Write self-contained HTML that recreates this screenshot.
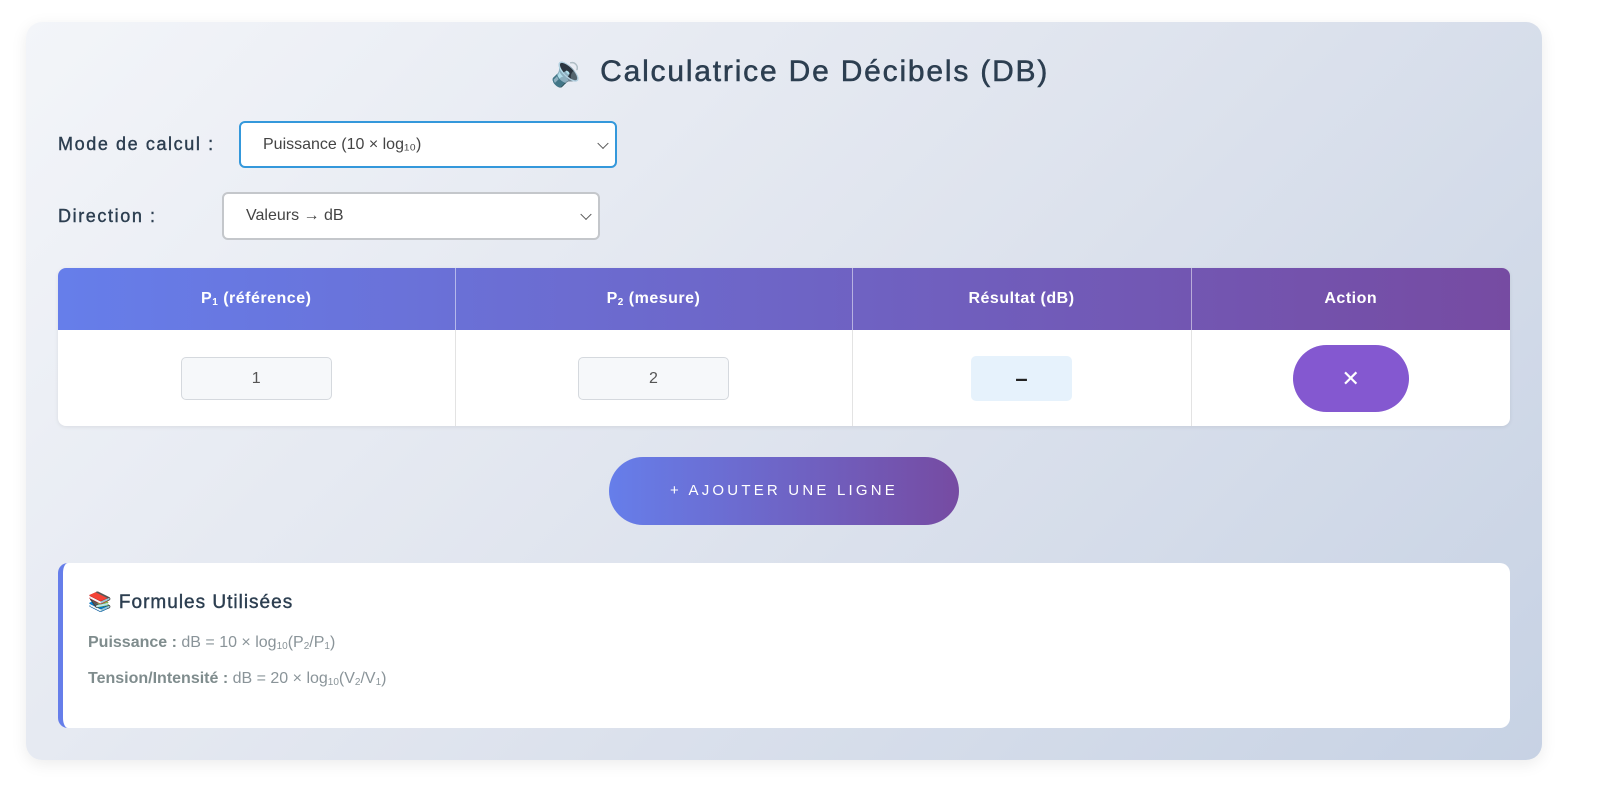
<!DOCTYPE html>
<html><head><meta charset="utf-8"><style>
*{box-sizing:border-box;margin:0;padding:0}
body{width:1600px;height:799px;background:#fff;font-family:"Liberation Sans",sans-serif;position:relative;overflow:hidden}
.card{position:absolute;left:26px;top:22px;width:1516px;height:738px;border-radius:16px;background:linear-gradient(135deg,#f3f5f9 0%,#dfe4ee 50%,#c7d2e4 100%);box-shadow:0 4px 16px rgba(0,0,0,.08)}
h1{position:absolute;left:0;right:0;top:54px;text-align:center;font-size:30px;font-weight:normal;color:#2c3e50;letter-spacing:1.8px;-webkit-text-stroke:.5px #2c3e50}
.lbl{position:absolute;left:58px;font-size:18px;letter-spacing:1.6px;color:#2c3e50;-webkit-text-stroke:.4px #2c3e50}
.sel{position:absolute;background:#fff;border-radius:6px;font-size:16px;color:#444;padding-left:22px;display:flex;align-items:center}
.sel:after{content:"";position:absolute;right:8px;top:50%;width:7px;height:7px;border-right:1.3px solid #555;border-bottom:1.3px solid #555;transform:translateY(-70%) rotate(45deg)}
table{position:absolute;left:58px;top:268px;width:1452px;border-collapse:collapse;border-radius:8px;overflow:hidden;background:#fff;box-shadow:0 1px 4px rgba(0,0,0,.08)}
th{height:62px;color:#fff;font-size:16px;font-weight:bold;letter-spacing:.5px;border-right:1px solid rgba(255,255,255,.5)}
thead tr{background:linear-gradient(90deg,#667eea,#764ba2)}
td{height:96px;border-right:1px solid #e3e3e3;text-align:center}
th:last-child,td:last-child{border-right:none}
.inp{display:inline-block;width:151px;height:43px;border:1px solid #d5d9de;border-radius:5px;background:#f6f8fa;line-height:41px;color:#555;font-size:16px}
.res{display:inline-block;width:101px;height:45px;background:#e6f2fc;border-radius:5px;line-height:45px;font-weight:bold;font-size:22px;color:#222}
.del{display:inline-block;width:116px;height:67px;border-radius:34px;background:#8458d0;color:#fff;line-height:67px;font-size:22px}
.add{position:absolute;left:609px;top:457px;width:350px;height:68px;border-radius:34px;background:linear-gradient(90deg,#667eea,#764ba2);color:#fff;text-align:center;line-height:68px;font-size:15px;letter-spacing:3.2px}
.form{position:absolute;left:58px;top:563px;width:1452px;height:165px;background:#fff;border-radius:10px;border-left:5px solid #667eea;padding:27px 0 0 25px}
.form h3{font-size:19px;font-weight:normal;letter-spacing:1px;color:#2c3e50;-webkit-text-stroke:.4px #2c3e50}
.form p{font-size:16px;color:#8a9499;margin-top:20px}
.form p+p{margin-top:18px}
.form p b{color:#7f8c8d}
sub{font-size:10px;vertical-align:-2px}
</style></head><body>
<div class="card"></div>
<h1>🔉 Calculatrice De Décibels (DB)</h1>
<div class="lbl" style="top:134px">Mode de calcul :</div>
<div class="sel" style="left:239px;top:121px;width:378px;height:47px;border:2px solid #3498db">Puissance (10 × log₁₀)</div>
<div class="lbl" style="top:206px">Direction :</div>
<div class="sel" style="left:222px;top:192px;width:378px;height:48px;border:2px solid #c4c7cb">Valeurs → dB</div>
<table><thead><tr><th style="width:397px">P<sub>1</sub> (référence)</th><th style="width:397px">P<sub>2</sub> (mesure)</th><th style="width:339px">Résultat (dB)</th><th>Action</th></tr></thead>
<tbody><tr><td><span class="inp">1</span></td><td><span class="inp">2</span></td><td><span class="res">–</span></td><td><span class="del">✕</span></td></tr></tbody></table>
<div class="add">+ AJOUTER UNE LIGNE</div>
<div class="form"><h3>📚 Formules Utilisées</h3>
<p><b>Puissance :</b> dB = 10 × log<sub>10</sub>(P<sub>2</sub>/P<sub>1</sub>)</p>
<p><b>Tension/Intensité :</b> dB = 20 × log<sub>10</sub>(V<sub>2</sub>/V<sub>1</sub>)</p></div>
</body></html>
